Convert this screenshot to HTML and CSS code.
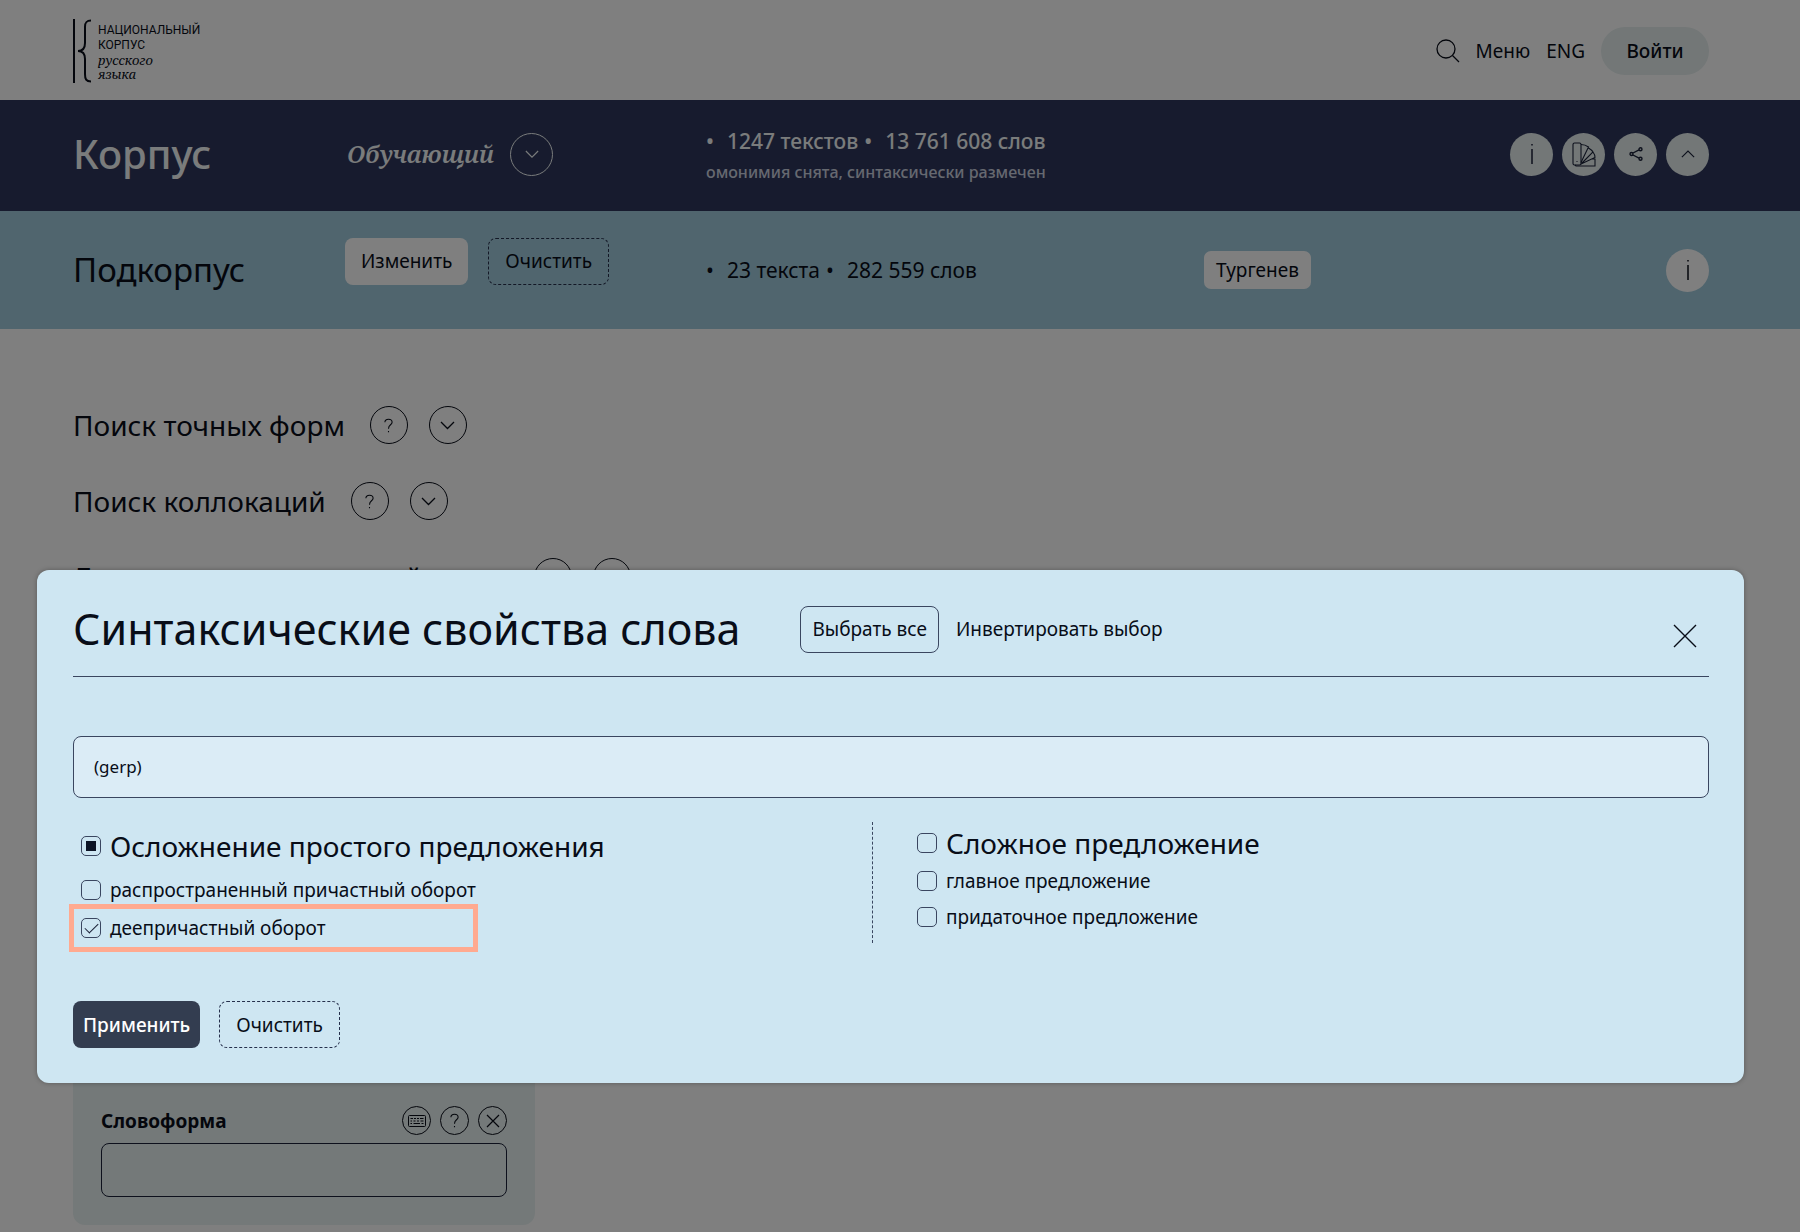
FILE: index.html
```html
<!DOCTYPE html>
<html lang="ru">
<head>
<meta charset="utf-8">
<title>Национальный корпус русского языка</title>
<link rel="stylesheet" href="styles.css">
</head>
<body>
<header class="top">
  <a class="logo" href="#">
    <svg width="18" height="64" viewBox="0 0 18 64" fill="none" stroke="currentColor" stroke-width="2"><path d="M1 0V64M18 1.500C13 1.500 12 4 12 8V24C12 29 10 32 5 32C10 32 12 35 12 40V55C12 60 13 62.500 18 62.500"/></svg>
    <span class="logo-text"><span>НАЦИОНАЛЬНЫЙ</span><span>КОРПУС</span><em>русского</em><em>языка</em></span>
  </a>
  <nav class="nav">
    <button class="plain" aria-label="Поиск"><svg width="24" height="24" viewBox="0 0 24 24" fill="none" stroke="currentColor" stroke-width="1.300"><circle cx="10" cy="10" r="9"/><path d="M16.500 16.500L23 23"/></svg></button>
    <a href="#">Меню</a>
    <a href="#">ENG</a>
    <button class="login">Войти</button>
  </nav>
</header>

<section class="band corpus">
  <h1 class="corpus-title">Корпус</h1>
  <div class="picker"><em>Обучающий</em>
    <button class="circle line-light" aria-label="Выбрать корпус"><svg width="14" height="9" viewBox="0 0 16 10" fill="none" stroke="currentColor" stroke-width="1.300"><path d="M1 1L8 8L15 1"/></svg></button>
  </div>
  <div class="summary">
    <ul class="stats"><li>1247 текстов</li><li>13 761 608 слов</li></ul>
    <p class="note">омонимия снята, синтаксически размечен</p>
  </div>
  <div class="tools">
    <button class="circle pale" aria-label="Информация"><svg width="4" height="22" viewBox="0 0 4 22" stroke="currentColor" stroke-width="1.500"><path d="M2 1V2.500M2 6V21"/></svg></button>
    <button class="circle pale" aria-label="Портрет"><svg width="24" height="25" viewBox="0 0 24 25" fill="none" stroke="currentColor" stroke-width="1.100"><rect x="1" y="1" width="8" height="22" rx="1.500"/><path d="M9 2.500C12 2.500 14.500 3.500 16.500 5L9 20.500M16.500 6C19 7.500 20.500 9 21 10L9.500 21.500M21 10C22.500 12 23 13.500 23 15.500L9 22M20 17H23V24H4L3 23M4.500 19.500H5.500"/></svg></button>
    <button class="circle pale" aria-label="Поделиться"><svg width="14" height="14" viewBox="0 0 14 14" fill="none" stroke="currentColor" stroke-width="1.400"><circle cx="2.500" cy="7" r="1.500"/><circle cx="11.500" cy="2.200" r="1.500"/><circle cx="11.500" cy="11.800" r="1.500"/><path d="M4 6L10 2.800M4 8L10 11.200"/></svg></button>
    <button class="circle pale" aria-label="Свернуть"><svg width="14" height="9" viewBox="0 0 16 10" fill="none" stroke="currentColor" stroke-width="1.300"><path d="M1 8L8 1L15 8"/></svg></button>
  </div>
</section>

<section class="band subcorpus">
  <h2 class="sub-title">Подкорпус</h2>
  <div class="actions">
    <button class="btn white">Изменить</button>
    <button class="btn dashed">Очистить</button>
  </div>
  <ul class="stats"><li>23 текста</li><li>282 559 слов</li></ul>
  <div class="tools">
    <span class="tag">Тургенев</span>
    <button class="circle white" aria-label="Информация"><svg width="4" height="22" viewBox="0 0 4 22" stroke="currentColor" stroke-width="1.500"><path d="M2 1V2.500M2 6V21"/></svg></button>
  </div>
</section>

<main class="search">
  <div class="row"><h3>Поиск точных форм</h3>
    <button class="circle medium" aria-label="Справка"><svg width="9" height="15" viewBox="0 0 10 16" fill="none" stroke="currentColor" stroke-width="1.200"><path d="M1 4.500C1 2.300 2.500 1 5 1S9 2.300 9 4.300C9 7.500 5 7 5 11.500M5 14V15.500"/></svg></button>
    <button class="circle medium" aria-label="Развернуть"><svg width="15" height="9" viewBox="0 0 15 9" fill="none" stroke="currentColor" stroke-width="1.300"><path d="M1 1L7.500 7.500L14 1"/></svg></button></div>
  <div class="row"><h3>Поиск коллокаций</h3>
    <button class="circle medium" aria-label="Справка"><svg width="9" height="15" viewBox="0 0 10 16" fill="none" stroke="currentColor" stroke-width="1.200"><path d="M1 4.500C1 2.300 2.500 1 5 1S9 2.300 9 4.300C9 7.500 5 7 5 11.500M5 14V15.500"/></svg></button>
    <button class="circle medium" aria-label="Развернуть"><svg width="15" height="9" viewBox="0 0 15 9" fill="none" stroke="currentColor" stroke-width="1.300"><path d="M1 1L7.500 7.500L14 1"/></svg></button></div>
  <div class="row"><h3>Лексико-грамматический поиск</h3>
    <button class="circle medium" aria-label="Справка"></button>
    <button class="circle medium" aria-label="Свернуть"></button></div>
  <form class="word">
    <div class="word-head">
      <label for="form">Словоформа</label>
      <button type="button" class="circle small" aria-label="Клавиатура"><svg width="18" height="12" viewBox="0 0 18 12" fill="none" stroke="currentColor"><rect x=".5" y=".5" width="17" height="11" rx="1"/><path d="M2.500 3.500H5M6 3.500H8M9 3.500H11M12 3.500H15.500M2.500 6H4M5.500 6H7.500M9 6H11M12.500 6H15.500M2.500 8.500H4M5.500 8.500H12M13.500 8.500H15.500"/></svg></button>
      <button type="button" class="circle small" aria-label="Справка"><svg width="9" height="15" viewBox="0 0 10 16" fill="none" stroke="currentColor" stroke-width="1.200"><path d="M1 4.500C1 2.300 2.500 1 5 1S9 2.300 9 4.300C9 7.500 5 7 5 11.500M5 14V15.500"/></svg></button>
      <button type="button" class="circle small" aria-label="Удалить"><svg width="14" height="14" viewBox="0 0 14 14" stroke="currentColor" stroke-width="1.200"><path d="M1 1L13 13M13 1L1 13"/></svg></button>
    </div>
    <input id="form" class="field" type="text">
  </form>
</main>

<div class="shade"></div>
<section class="dialog" role="dialog" aria-labelledby="dialog-title">
  <div class="dialog-head">
    <h2 id="dialog-title">Синтаксические свойства слова</h2>
    <button class="btn outline">Выбрать все</button>
    <button class="plain">Инвертировать выбор</button>
    <button class="plain close" aria-label="Закрыть"><svg width="24" height="24" viewBox="0 0 24 24" stroke="currentColor" stroke-width="1.400"><path d="M1 1L23 23M23 1L1 23"/></svg></button>
  </div>
  <input class="query" type="text" value="(gerp)" aria-label="Выбранные свойства">
  <div class="groups">
    <div class="group first">
      <label class="check head"><input type="checkbox" class="partial"><span>Осложнение простого предложения</span></label>
      <label class="check"><input type="checkbox"><span>распространенный причастный оборот</span></label>
      <label class="check marked"><input type="checkbox" checked><span>деепричастный оборот</span></label>
    </div>
    <div class="group second">
      <label class="check head"><input type="checkbox"><span>Сложное предложение</span></label>
      <label class="check"><input type="checkbox"><span>главное предложение</span></label>
      <label class="check"><input type="checkbox"><span>придаточное предложение</span></label>
    </div>
  </div>
  <div class="foot">
    <button class="btn apply">Применить</button>
    <button class="btn dashed">Очистить</button>
  </div>
</section>
</body>
</html>
```
FILE: styles.css
```css
*, *::before, *::after { box-sizing: border-box; }
body {
  margin: 0;
  position: relative;
  min-height: 100vh;
  background: #fff;
  color: #080d18;
  font: 19px/28px "Noto Sans", sans-serif;
}
h1, h2, h3, p, ul { margin: 0; padding: 0; font-weight: 400; }
button, input { font: inherit; color: inherit; margin: 0; }
button { display: flex; align-items: center; justify-content: center; padding: 0; border: 0; background: none; white-space: nowrap; flex: none; }
a { color: inherit; text-decoration: none; }
svg { display: block; }

.top { display: flex; justify-content: space-between; align-items: center; height: 100px; padding: 2px 91px 0 73px; }
.logo { display: flex; gap: 7px; align-items: center; }
.logo-text { display: flex; flex-direction: column; padding-top: 2px; font: 12px/15px Roboto, sans-serif; }
.logo-text em { font: italic 13px/14px "Noto Serif", "Liberation Serif", serif; }
.nav { display: flex; align-items: center; gap: 16px; }
.login { width: 108px; height: 48px; border-radius: 24px; background: #e6efef; font-weight: 500; }

.band {
  display: grid;
  grid-template-columns: 272fr 361fr 498fr 505fr;
  align-items: center;
  padding: 0 91px 0 73px;
}
.corpus { height: 111px; padding-bottom: 3px; background: #2e375c; color: #f4f8f8; }
.corpus .stats, .corpus .note { font-weight: 500; }
.summary { padding-top: 4px; }
.corpus-title { font-size: 40px; line-height: 56px; font-weight: 500; }
.picker { display: flex; align-items: center; gap: 16px; padding-left: 2px; }
.picker em { font: italic 600 24px/40px "Noto Serif", "Liberation Serif", serif; }
.circle { width: 43px; height: 43px; border-radius: 50%; }
.line-light { border: 1px solid currentColor; }
.pale { background: #e6efef; color: #1a2138; }
.white { background: #fff; }
.stats { display: flex; gap: 6px; list-style: none; font-size: 21px; line-height: 32px; white-space: nowrap; }
.stats li::before { content: "•"; margin-right: 13px; }
.note { font-size: 16px; line-height: 30px; color: #cdd2e0; white-space: nowrap; }
.tools { display: flex; justify-content: flex-end; align-items: center; gap: 9px; }

.subcorpus { height: 118px; background: #a0cadc; }
.sub-title { font-size: 33px; line-height: 44px; }
.actions { display: flex; gap: 20px; padding-bottom: 18px; }
.btn { height: 47px; padding: 0 16px; border-radius: 8px; }
.dashed { border: 1px dashed #26304c; }
.subcorpus .tools { justify-content: space-between; }
.tag { padding: 5px 12px; border-radius: 7px; background: #fff; }

.search { display: flex; flex-direction: column; gap: 38px; padding: 77px 91px 7px 73px; }
.row { display: flex; align-items: center; gap: 21px; height: 38px; }
.row h3 { padding-right: 4px; font-size: 28px; line-height: 38px; }
.medium { width: 38px; height: 38px; border: 1px solid currentColor; }
.word { display: flex; flex-direction: column; justify-content: flex-end; gap: 8px; width: 462px; min-height: 591px; padding: 28px; border-radius: 12px; background: #e9f2f2; }
.word-head { display: flex; align-items: center; gap: 9px; font-weight: 700; }
.word-head label { flex: 1; }
.small { width: 29px; height: 29px; border: 1px solid currentColor; }
.field { width: 100%; height: 54px; padding: 0 20px; border: 1px solid #1a2138; border-radius: 8px; background: transparent; }

.shade { position: absolute; inset: 0; background: rgba(0, 0, 0, .5); }
.dialog {
  position: absolute;
  top: 570px;
  left: 37px;
  right: 56px;
  padding: 30px 35px 35px 36px;
  border-radius: 12px;
  background: #cee6f2;
  box-shadow: 0 0 5px rgba(0, 0, 0, .3);
}
.dialog-head { display: flex; align-items: center; height: 77px; padding-bottom: 18px; border-bottom: 1px solid #3a4660; }
.dialog-head h2 { margin-right: 60px; font-size: 43px; line-height: 58px; }
.outline { border: 1px solid #3a4660; padding: 0 11px; margin-right: 17px; }
.close { margin: 14px 12px 0 auto; }
.query { display: block; width: 100%; height: 62px; margin-top: 59px; padding: 0 20px 2px; border: 1px solid #3a4660; border-radius: 8px; background: #dbecf6; font-size: 17px; }

.groups { display: grid; grid-template-columns: 799fr 837fr; align-items: start; margin-top: 24px; }
.group { display: flex; flex-direction: column; align-items: flex-start; }
.first { padding: 2px 0 0 8px; }
.first .check { height: 38px; }
.first .head { height: 44px; margin-bottom: 3px; }
.second { border-left: 1px dashed #3a4660; padding: 1px 0 8px 44px; }
.second .check { height: 36px; }
.second .head { height: 40px; }
.check { display: flex; align-items: center; gap: 9px; position: relative; }
.head { font-size: 28px; line-height: 38px; }
.check input { appearance: none; flex: none; display: grid; place-items: center; width: 20px; height: 20px; border: 1px solid #3a4660; border-radius: 5px; }
.partial::before { content: ""; width: 10px; height: 10px; background: #0d1426; }
.check input:checked::before { content: ""; width: 13px; height: 7px; border: solid #1a2138; border-width: 0 0 1px 1px; transform: translateY(-2px) rotate(-45deg); }
.marked::after { content: ""; position: absolute; left: -12px; top: -5px; width: 409px; height: 48px; border: 5px solid #ffaa90; }
.foot { display: flex; gap: 19px; margin-top: 54px; }
.apply { padding: 0 10px; background: #333d50; color: #fff; font-weight: 500; }
```
